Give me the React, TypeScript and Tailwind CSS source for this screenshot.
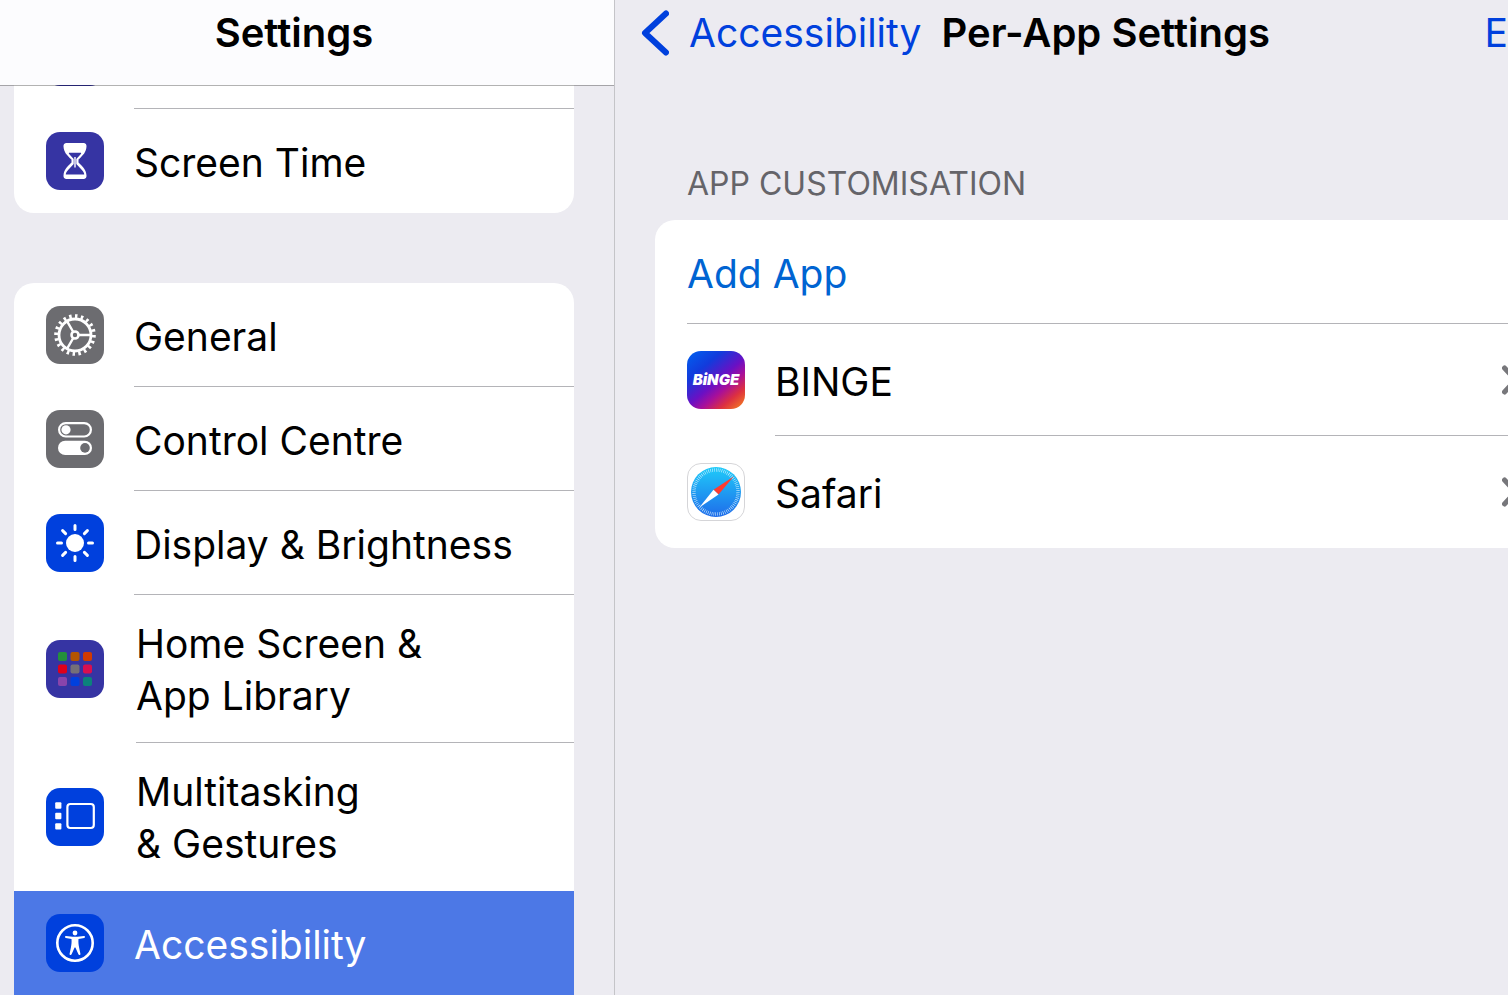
import type { ReactNode } from 'react';

const HourglassIcon = () => (
  <svg viewBox="0 0 58 58" className="h-full w-full">
    <path
      d="M20.500 11h17c2 0 3.200 1.200 3 3.500-.4 5.500-3 8.500-8 13v3c5 4.500 7.600 7.500 8 13 .2 2.300-1 3.500-3 3.500h-17c-2 0-3.200-1.200-3-3.500.4-5.500 3-8.500 8-13v-3c-5-4.500-7.600-7.500-8-13-.2-2.300 1-3.500 3-3.500z"
      fill="#fff"
    />
    <path
      d="M23.500 20.800h11c.8 0 .8.600.4 1.100l-4.600 5.100v5l5.600 6c2 2.200 2.300 3.500 2.300 4.600H19.800c0-1.100.3-2.400 2.300-4.600l5.600-6v-5l-4.600-5.100c-.4-.5-.4-1.100.4-1.100z"
      fill="#3634a3"
    />
    <path d="M28.300 25h1.400v10.500h-1.400z" fill="#fff" />
  </svg>
);

const GearIcon = () => (
  <svg viewBox="0 0 58 58" className="h-full w-full" fill="none" stroke="#fff">
    <circle cx="29" cy="29" r="18.800" strokeWidth="4" pathLength="80" strokeDasharray="1.700 2.300" />
    <circle cx="29" cy="29" r="16" strokeWidth="2.800" />
    <path d="M29 29h16M29 29l-8-13.900M29 29l-8 13.900" strokeWidth="2.400" />
    <circle cx="29" cy="29" r="3.500" fill="#6c6c70" strokeWidth="2.600" />
  </svg>
);

const TogglesIcon = () => (
  <svg viewBox="0 0 58 58" className="h-full w-full">
    <rect x="13.100" y="13.100" width="31.800" height="13.400" rx="6.700" fill="none" stroke="#fff" strokeWidth="2.200" />
    <circle cx="20" cy="19.800" r="4.600" fill="#fff" />
    <rect x="12" y="30.700" width="34" height="14.400" rx="7.200" fill="#fff" />
    <circle cx="39" cy="37.900" r="4.800" fill="#6c6c70" />
  </svg>
);

const SunIcon = () => (
  <svg viewBox="0 0 58 58" className="h-full w-full">
    <circle cx="29" cy="29" r="9" fill="#fff" />
    <path
      d="M29 11.500v4M29 42.500v4M11.500 29h4M42.500 29h4M16.600 16.600l3 3M38.400 38.400l3 3M16.600 41.400l3-3M38.400 19.600l3-3"
      stroke="#fff"
      strokeWidth="3"
      strokeLinecap="round"
    />
  </svg>
);

const gridColors = ['#248f3c', '#b35400', '#d13a00', '#e0001a', '#757078', '#d80f50', '#8944ab', '#0040dd', '#0c817b'];

const AppGridIcon = () => (
  <svg viewBox="0 0 58 58" className="h-full w-full">
    {gridColors.map((color, i) => (
      <rect key={color} x={12 + (i % 3) * 12.5} y={12 + Math.floor(i / 3) * 12.5} width="9" height="9" rx="2" fill={color} />
    ))}
  </svg>
);

const MultitaskIcon = () => (
  <svg viewBox="0 0 58 58" className="h-full w-full" fill="#fff">
    <rect x="9.200" y="14.300" width="6.200" height="6.400" rx="1" />
    <rect x="9.200" y="24.800" width="6.200" height="6.400" rx="1" />
    <rect x="9.200" y="35.200" width="6.200" height="6.400" rx="1" />
    <rect x="21.400" y="16" width="26.400" height="24" rx="3" fill="none" stroke="#fff" strokeWidth="2.200" />
  </svg>
);

const AccessibilityIcon = () => (
  <svg viewBox="0 0 58 58" className="h-full w-full" fill="#fff">
    <circle cx="29" cy="29" r="17.700" fill="none" stroke="#fff" strokeWidth="2.600" />
    <circle cx="29" cy="19" r="2.400" />
    <path d="M20 22l6.500.8h5l6.500-.8c1.200-.1 1.400 1.600.2 1.900l-5.700 1.100c-.3 3.300.1 6 .6 8.500l1.300 6.300c.3 1.400-1.500 1.800-2 .5L29.400 33.500h-.8l-3 6.800c-.5 1.300-2.300.9-2-.5l1.300-6.300c.5-2.500.9-5.200.6-8.500l-5.700-1.100c-1.200-.3-1-2 .2-1.900z" />
  </svg>
);

const SafariIcon = () => (
  <svg viewBox="0 0 58 58" className="h-full w-full">
    <defs>
      <linearGradient id="safari" x1="0" y1="0" x2="0" y2="1">
        <stop offset="0" stopColor="#1fcbf9" />
        <stop offset="1" stopColor="#1f6cea" />
      </linearGradient>
    </defs>
    <rect x=".5" y=".5" width="57" height="57" rx="13.500" fill="#fff" stroke="#d5d5d8" />
    <circle cx="29" cy="29" r="25" fill="url(#safari)" />
    <circle cx="29" cy="29" r="22" fill="none" stroke="#d8f1ff" strokeWidth="3.400" pathLength="144" strokeDasharray=".6 1.400" />
    <path d="M46.700 13.500L26.500 26.700l5 4.700z" fill="#ff3b30" />
    <path d="M12.300 44.500l14.200-17.800 5 4.700z" fill="#fff" />
  </svg>
);

const Tile = ({ color, children }: { color: string; children?: ReactNode }) => (
  <span className={`block size-[58px] shrink-0 overflow-hidden rounded-[14px] ${color}`}>{children}</span>
);

const settings = [
  { label: 'General', color: 'bg-[#6c6c70]', icon: <GearIcon />, divider: true },
  { label: 'Control Centre', color: 'bg-[#6c6c70]', icon: <TogglesIcon />, divider: true },
  { label: 'Display & Brightness', color: 'bg-[#0040dd]', icon: <SunIcon />, divider: true },
  { label: 'Home Screen &\nApp Library', color: 'bg-[#3634a3]', icon: <AppGridIcon />, tall: true, divider: true },
  { label: 'Multitasking\n& Gestures', color: 'bg-[#0040dd]', icon: <MultitaskIcon />, tall: true },
  { label: 'Accessibility', color: 'bg-[#0040dd]', icon: <AccessibilityIcon />, selected: true },
];

const apps = [
  {
    name: 'BINGE',
    icon: (
      <span className="flex size-[58px] shrink-0 items-center justify-center rounded-[14px] bg-[linear-gradient(140deg,#0062f0_0%,#123bdc_28%,#6a10c4_52%,#a80f9a_65%,#dd3040_80%,#f78a1c_100%)] text-[15px] font-black text-white italic">
        BiNGE
      </span>
    ),
  },
  { name: 'Safari', icon: <span className="block size-[58px] shrink-0"><SafariIcon /></span> },
];

const Sidebar = () => (
  <aside className="flex w-[615px] shrink-0 flex-col border-r border-[#c4c4c8]">
    <header className="relative z-10 flex h-[86px] shrink-0 justify-center border-b border-black/30 bg-[#fcfcfe] bg-clip-padding pt-[7px] pr-[26px]">
      <h1 className="text-[40px] leading-[52px] font-semibold">Settings</h1>
    </header>
    <nav className="pr-10 pl-[14px]">
      {/* the first row is scrolled up under the header */}
      <div className="-mt-[81px] rounded-b-[20px] bg-white">
        <div className="flex h-[104px] items-center pl-8">
          <Tile color="bg-[#3634a3]" />
          <span className="ml-[30px] h-full flex-1 border-b border-[#b4b4b8]" />
        </div>
        <button className="flex h-[104px] w-full items-center pl-8 text-left">
          <Tile color="bg-[#3634a3]"><HourglassIcon /></Tile>
          <span className="ml-[30px] pt-1">Screen Time</span>
        </button>
      </div>
      <ul className="mt-[70px] rounded-t-[20px] bg-white">
        {settings.map((item) => (
          <li key={item.label}>
            <button
              aria-current={item.selected ? 'page' : undefined}
              className={`flex w-full items-center pl-8 text-left ${item.tall ? 'h-[148px]' : 'h-[104px]'} ${
                item.selected ? 'bg-[#4c78e6] text-white' : ''
              }`}
            >
              <Tile color={item.color}>{item.icon}</Tile>
              <span
                className={`flex h-full flex-1 items-center whitespace-pre-line ${item.tall ? 'ml-8 pt-[2px]' : 'ml-[30px] pt-1'} ${
                  item.divider ? 'border-b border-[#b4b4b8]' : ''
                }`}
              >
                {item.label}
              </span>
            </button>
          </li>
        ))}
      </ul>
    </nav>
  </aside>
);

const AppSettings = () => (
  <main className="min-w-0 flex-1 overflow-hidden">
    {/* runs past the right edge of the window */}
    <div className="w-[calc(100%+80px)]">
      <header className="flex h-[86px] items-start pt-[7px] pr-[34px] pl-[26px] whitespace-nowrap">
        <a href="#accessibility" className="flex items-center text-[#0040dd]">
          <svg viewBox="0 0 28 48" className="mr-5 h-12 w-7" fill="none" stroke="currentColor" strokeWidth="6" strokeLinecap="round" strokeLinejoin="round">
            <path d="M25 4.500L4 24 25 43.500" />
          </svg>
          Accessibility
        </a>
        <h2 className="ml-5 text-[40px] leading-[52px] font-semibold">Per-App Settings</h2>
        <button className="ml-auto text-[#0040dd]">Edit</button>
      </header>
      <section className="px-10">
        <h3 className="mt-[75px] mb-[13px] pl-8 text-[32px] leading-[46px] text-[#656469]">APP CUSTOMISATION</h3>
        <ul className="rounded-[20px] bg-white pl-8">
          <li className="h-[104px] border-b border-[#b4b4b8]">
            <button className="h-full w-full pt-1 text-left text-[#0064d2]">Add App</button>
          </li>
          {apps.map((app, i) => (
            <li key={app.name}>
              <button className="flex h-[112px] w-full items-center text-left">
                {app.icon}
                <span
                  className={`ml-[30px] flex h-full flex-1 items-center justify-between pr-[30px] ${
                    i < apps.length - 1 ? 'border-b border-[#b4b4b8]' : ''
                  }`}
                >
                  <span className="pt-1">{app.name}</span>
                  <svg viewBox="0 0 16 30" className="h-[30px] w-4" fill="none" stroke="#77777b" strokeWidth="5" strokeLinecap="round" strokeLinejoin="round">
                    <path d="M2.500 3l11 12-11 12" />
                  </svg>
                </span>
              </button>
            </li>
          ))}
        </ul>
      </section>
    </div>
  </main>
);

const App = () => {
  return (
    <div className="flex h-screen overflow-hidden bg-[#ecebf1] font-['Inter',sans-serif] text-[39px] leading-[52px] text-black">
      <Sidebar />
      <AppSettings />
    </div>
  );
};

export default App;
